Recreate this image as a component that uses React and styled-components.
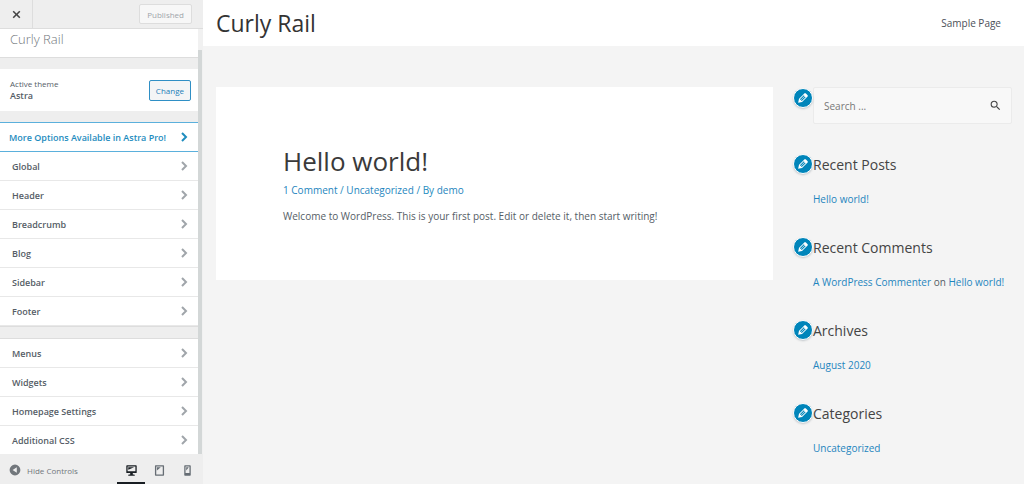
import React from 'react';
import styled, { createGlobalStyle } from 'styled-components';

const GlobalStyle = createGlobalStyle`
  * {
    box-sizing: border-box;
  }

  body {
    margin: 0;
    background: #f4f4f4;
    font-family: 'Open Sans', 'Noto Sans', sans-serif;
    color: #555d66;
  }

  h1, h2, h3, p, ul {
    margin: 0;
    padding: 0;
    font-weight: 400;
  }

  ul {
    list-style: none;
  }

  button, input {
    font-family: inherit;
  }

  button {
    cursor: pointer;
  }
`;

const Page = styled.div`
  display: flex;
  height: 100vh;
`;

/* ---------- Customizer panel ---------- */

const Panel = styled.aside`
  flex: 0 0 203px;
  display: flex;
  flex-direction: column;
  background: #eeeeee;
`;

const PanelHeader = styled.div`
  flex: none;
  display: flex;
  align-items: center;
  justify-content: space-between;
  height: 29px;
  padding-right: 11px;
  border-bottom: 1px solid #dddddd;
`;

const CloseButton = styled.button`
  display: flex;
  align-items: center;
  justify-content: center;
  width: 33px;
  height: 28px;
  padding: 0;
  border: 0;
  border-right: 1px solid #dddddd;
  background: transparent;
  color: #444444;
`;

const PublishButton = styled.button`
  height: 20px;
  padding: 0 7px;
  border: 1px solid #dddddd;
  border-radius: 2px;
  background: #f7f7f7;
  color: #a0a5aa;
  font-size: 8px;
`;

const PanelBody = styled.div`
  flex: 1;
  display: flex;
  min-height: 0;
  overflow: hidden;
`;

const PanelContent = styled.div`
  flex: 1;
  display: flex;
  flex-direction: column;
  gap: 11px;
  min-width: 0;

  > * {
    flex: none;
  }
`;

const ScrollTrack = styled.div`
  flex: 0 0 5px;
  padding-top: 21px;
  background: #f1f1f1;
`;

const ScrollThumb = styled.div`
  width: 4px;
  height: 100%;
  background: #d3d7d7;
`;

const SiteName = styled.div`
  height: 29px;
  padding-left: 10px;
  border-bottom: 1px solid #dddddd;
  background: #ffffff;
  color: #72777c;
  font-size: 13px;
  font-weight: 300;
  line-height: 21px;
`;

const ThemeInfo = styled.div`
  display: flex;
  align-items: center;
  justify-content: space-between;
  height: 42px;
  padding: 0 7px 0 10px;
  background: #ffffff;
  font-size: 8px;
  line-height: 12px;
`;

const ThemeName = styled.strong`
  display: block;
  font-size: 9px;
  font-weight: 600;
`;

const ChangeButton = styled.button`
  height: 21px;
  padding: 0 6px;
  border: 1px solid #2f8fc5;
  border-radius: 2px;
  background: #f3f5f6;
  color: #1c80b8;
  font-size: 8px;
  font-weight: 500;
`;

const Menu = styled.ul`
  border-top: 1px solid ${props => (props.$promo ? '#5bb0dc' : '#dddddd')};
  border-bottom: 1px solid #dddddd;
  background: #ffffff;
`;

const MenuButton = styled.button`
  display: flex;
  align-items: center;
  justify-content: space-between;
  width: 100%;
  height: 29px;
  padding: 0 10px 0 ${props => (props.$promo ? '9px' : '12px')};
  border: 0;
  border-bottom: 1px solid ${props => (props.$promo ? '#5bb0dc' : '#e8e8e8')};
  background: #ffffff;
  color: ${props => (props.$promo ? '#1e8cbe' : '#555d66')};
  font-size: 9px;
  font-weight: 600;
  text-align: left;
  white-space: nowrap;
`;

const ChevronIcon = styled.svg`
  flex: none;
  width: 8px;
  height: 10px;
  fill: none;
  stroke: ${props => (props.$active ? '#1e8cbe' : '#a0a5aa')};
  stroke-width: 2;
`;

const PanelFooter = styled.div`
  flex: none;
  display: flex;
  align-items: stretch;
  justify-content: space-between;
  height: 30px;
  background: #eeeeee;
`;

const CollapseButton = styled.button`
  display: flex;
  align-items: center;
  gap: 6px;
  padding: 2px 0 0 9px;
  border: 0;
  background: transparent;
  color: #72777c;
  font-size: 8px;
`;

const Devices = styled.div`
  display: flex;
  padding-right: 2px;
`;

const DeviceButton = styled.button`
  display: flex;
  align-items: center;
  justify-content: center;
  width: 28px;
  padding: 4px 0 0;
  border: 0;
  border-bottom: 2px solid ${props => (props.$active ? '#191e23' : 'transparent')};
  background: transparent;
  color: ${props => (props.$active ? '#191e23' : '#666d74')};
`;

const DashIcon = styled.svg`
  display: block;
  width: ${props => props.$size || 13}px;
  height: ${props => props.$size || 13}px;
  fill: currentColor;
`;

/* ---------- Site preview ---------- */

const Preview = styled.div`
  flex: 1;
  min-width: 0;
  overflow: hidden;
`;

const SiteHeader = styled.header`
  display: flex;
  align-items: center;
  justify-content: space-between;
  height: 46px;
  padding: 0 23px 0 13px;
  background: #ffffff;
`;

const SiteTitle = styled.h1`
  color: #333333;
  font-size: 23px;
  line-height: 30px;
`;

const Nav = styled.nav`
  display: flex;
`;

const NavLink = styled.a`
  color: #4b4f58;
  font-size: 10px;
  line-height: 16px;
  text-decoration: none;
`;

const Columns = styled.div`
  display: grid;
  grid-template-columns: minmax(0, 1fr) 199px;
  gap: 40px;
  align-items: start;
  padding: 41px 12px 0 13px;
`;

const Article = styled.article`
  padding: 56px 67px;
  background: #ffffff;
`;

const PostTitle = styled.h2`
  color: #3a3a3a;
  font-size: 26px;
  line-height: 36px;
`;

const PostMeta = styled.p`
  margin-top: 3px;
  color: #1e8cbe;
  font-size: 10px;
  line-height: 16px;
`;

const PostText = styled.p`
  margin-top: 10px;
  font-size: 10px;
  line-height: 16px;
`;

const Link = styled.a`
  color: #1e85be;
  text-decoration: none;
`;

const Widgets = styled.aside`
  display: flex;
  flex-direction: column;
  gap: 31px;
`;

const Widget = styled.section`
  position: relative;
  font-size: 10px;
  line-height: 16px;
`;

const WidgetTitle = styled.h3`
  margin-bottom: 16px;
  color: #444444;
  font-size: 14px;
  line-height: 20px;
`;

const EditButton = styled.button`
  position: absolute;
  top: ${props => (props.$low ? '1px' : '-1px')};
  left: -20px;
  display: flex;
  align-items: center;
  justify-content: center;
  width: 20px;
  height: 20px;
  padding: 0;
  border: 1px solid #ffffff;
  border-radius: 50%;
  background: #0085ba;
  color: #ffffff;
  box-shadow: 0 1px 2px rgba(46, 68, 83, 0.25);
`;

const SearchForm = styled.form`
  display: flex;
  align-items: center;
  height: 37px;
  padding: 0 9px 0 10px;
  border: 1px solid #ebebeb;
  border-radius: 2px;
  background: #f8f8f8;
`;

const SearchInput = styled.input`
  flex: 1;
  min-width: 0;
  padding: 0;
  border: 0;
  outline: 0;
  background: transparent;
  font-size: 10px;

  &::placeholder {
    color: #777777;
    opacity: 1;
  }
`;

const SearchButton = styled.button`
  display: flex;
  padding: 0;
  border: 0;
  background: transparent;
  color: #444444;
`;

const paths = {
  edit: 'M13.89 3.39l2.71 2.72c.46.46.42 1.24.03 1.64l-8.01 8.02-5.56 1.16 1.16-5.58s7.6-7.63 7.99-8.03c.39-.39 1.22-.39 1.68.07zm-2.73 2.79l-5.59 5.61 1.11 1.11 5.54-5.65zm-2.97 8.23l5.58-5.6-1.07-1.08-5.59 5.6z',
  close: 'M5 3l5 5 5-5 2 2-5 5 5 5-2 2-5-5-5 5-2-2 5-5-5-5z',
  desktop: 'M3 2h14c.55 0 1 .45 1 1v10c0 .55-.45 1-1 1h-5v2h2c.55 0 1 .45 1 1v1H5v-1c0-.55.45-1 1-1h2v-2H3c-.55 0-1-.45-1-1V3c0-.55.45-1 1-1zm13 9V4H4v7h12zM5 5h9L5 9V5z',
  tablet: 'M4 2h12c.55 0 1 .45 1 1v14c0 .55-.45 1-1 1H4c-.55 0-1-.45-1-1V3c0-.55.45-1 1-1zm11 14V4H5v12h10zM6 5h6l-6 5V5z',
  phone: 'M6 2h8c.55 0 1 .45 1 1v14c0 .55-.45 1-1 1H6c-.55 0-1-.45-1-1V3c0-.55.45-1 1-1zm7 12V4H7v10h6zM8 5h4l-4 5V5z',
  collapse: 'M10 1a9 9 0 1 0 0 18 9 9 0 0 0 0-18zm3 4.500v9L6 10z',
  search: 'M15.500 14h-.79l-.28-.27A6.470 6.470 0 0 0 16 9.500 6.500 6.500 0 1 0 9.500 16c1.610 0 3.090-.59 4.230-1.570l.27.28v.79l5 4.990L20.490 19l-4.990-5zm-6 0C7.010 14 5 11.990 5 9.500S7.010 5 9.500 5 14 7.010 14 9.500 11.990 14 9.500 14z',
};

const Icon = ({ name, size, box = 20 }) => (
  <DashIcon $size={size} viewBox={`0 0 ${box} ${box}`} aria-hidden="true">
    <path d={paths[name]} fillRule="evenodd" />
  </DashIcon>
);

const MenuItem = ({ label, promo }) => (
  <li>
    <MenuButton type="button" $promo={promo}>
      {label}
      <ChevronIcon $active={promo} viewBox="0 0 8 10" aria-hidden="true">
        <path d="M2 1l4 4-4 4" />
      </ChevronIcon>
    </MenuButton>
  </li>
);

const EditShortcut = ({ label, low }) => (
  <EditButton type="button" aria-label={label} $low={low}>
    <Icon name="edit" size={14} />
  </EditButton>
);

const SidebarWidget = ({ title, children }) => (
  <Widget>
    <EditShortcut label={`Edit ${title}`} />
    <WidgetTitle>{title}</WidgetTitle>
    {children}
  </Widget>
);

const themeItems = ['Global', 'Header', 'Breadcrumb', 'Blog', 'Sidebar', 'Footer'];
const coreItems = ['Menus', 'Widgets', 'Homepage Settings', 'Additional CSS'];
const devices = ['desktop', 'tablet', 'phone'];

const App = () => (
  <>
    <GlobalStyle />
    <Page>
      <Panel>
        <PanelHeader>
          <CloseButton type="button" aria-label="Close">
            <Icon name="close" size={11} />
          </CloseButton>
          <PublishButton type="button">Published</PublishButton>
        </PanelHeader>

        <PanelBody>
          <PanelContent>
            <SiteName>Curly Rail</SiteName>
            <ThemeInfo>
              <div>
                Active theme
                <ThemeName>Astra</ThemeName>
              </div>
              <ChangeButton type="button">Change</ChangeButton>
            </ThemeInfo>
            <Menu $promo>
              <MenuItem label="More Options Available in Astra Pro!" promo />
              {themeItems.map(item => <MenuItem key={item} label={item} />)}
            </Menu>
            <Menu>
              {coreItems.map(item => <MenuItem key={item} label={item} />)}
            </Menu>
          </PanelContent>
          <ScrollTrack>
            <ScrollThumb />
          </ScrollTrack>
        </PanelBody>

        <PanelFooter>
          <CollapseButton type="button">
            <Icon name="collapse" size={12} />
            Hide Controls
          </CollapseButton>
          <Devices>
            {devices.map(device => (
              <DeviceButton
                key={device}
                type="button"
                aria-label={device}
                $active={device === 'desktop'}
              >
                <Icon name={device} />
              </DeviceButton>
            ))}
          </Devices>
        </PanelFooter>
      </Panel>

      <Preview>
        <SiteHeader>
          <SiteTitle>Curly Rail</SiteTitle>
          <Nav>
            <NavLink href="#sample">Sample Page</NavLink>
          </Nav>
        </SiteHeader>

        <Columns>
          <Article>
            <PostTitle>Hello world!</PostTitle>
            <PostMeta>
              <Link href="#comments">1 Comment</Link> / <Link href="#uncategorized">Uncategorized</Link> / By <Link href="#demo">demo</Link>
            </PostMeta>
            <PostText>
              Welcome to WordPress. This is your first post. Edit or delete it, then start writing!
            </PostText>
          </Article>

          <Widgets>
            <Widget>
              <EditShortcut label="Edit search" low />
              <SearchForm>
                <SearchInput type="search" aria-label="Search" placeholder="Search ..." />
                <SearchButton type="button" aria-label="Submit search">
                  <Icon name="search" box={24} />
                </SearchButton>
              </SearchForm>
            </Widget>
            <SidebarWidget title="Recent Posts">
              <Link href="#hello">Hello world!</Link>
            </SidebarWidget>
            <SidebarWidget title="Recent Comments">
              <Link href="#commenter">A WordPress Commenter</Link> on <Link href="#hello">Hello world!</Link>
            </SidebarWidget>
            <SidebarWidget title="Archives">
              <Link href="#august">August 2020</Link>
            </SidebarWidget>
            <SidebarWidget title="Categories">
              <Link href="#uncategorized">Uncategorized</Link>
            </SidebarWidget>
          </Widgets>
        </Columns>
      </Preview>
    </Page>
  </>
);

export default App;
